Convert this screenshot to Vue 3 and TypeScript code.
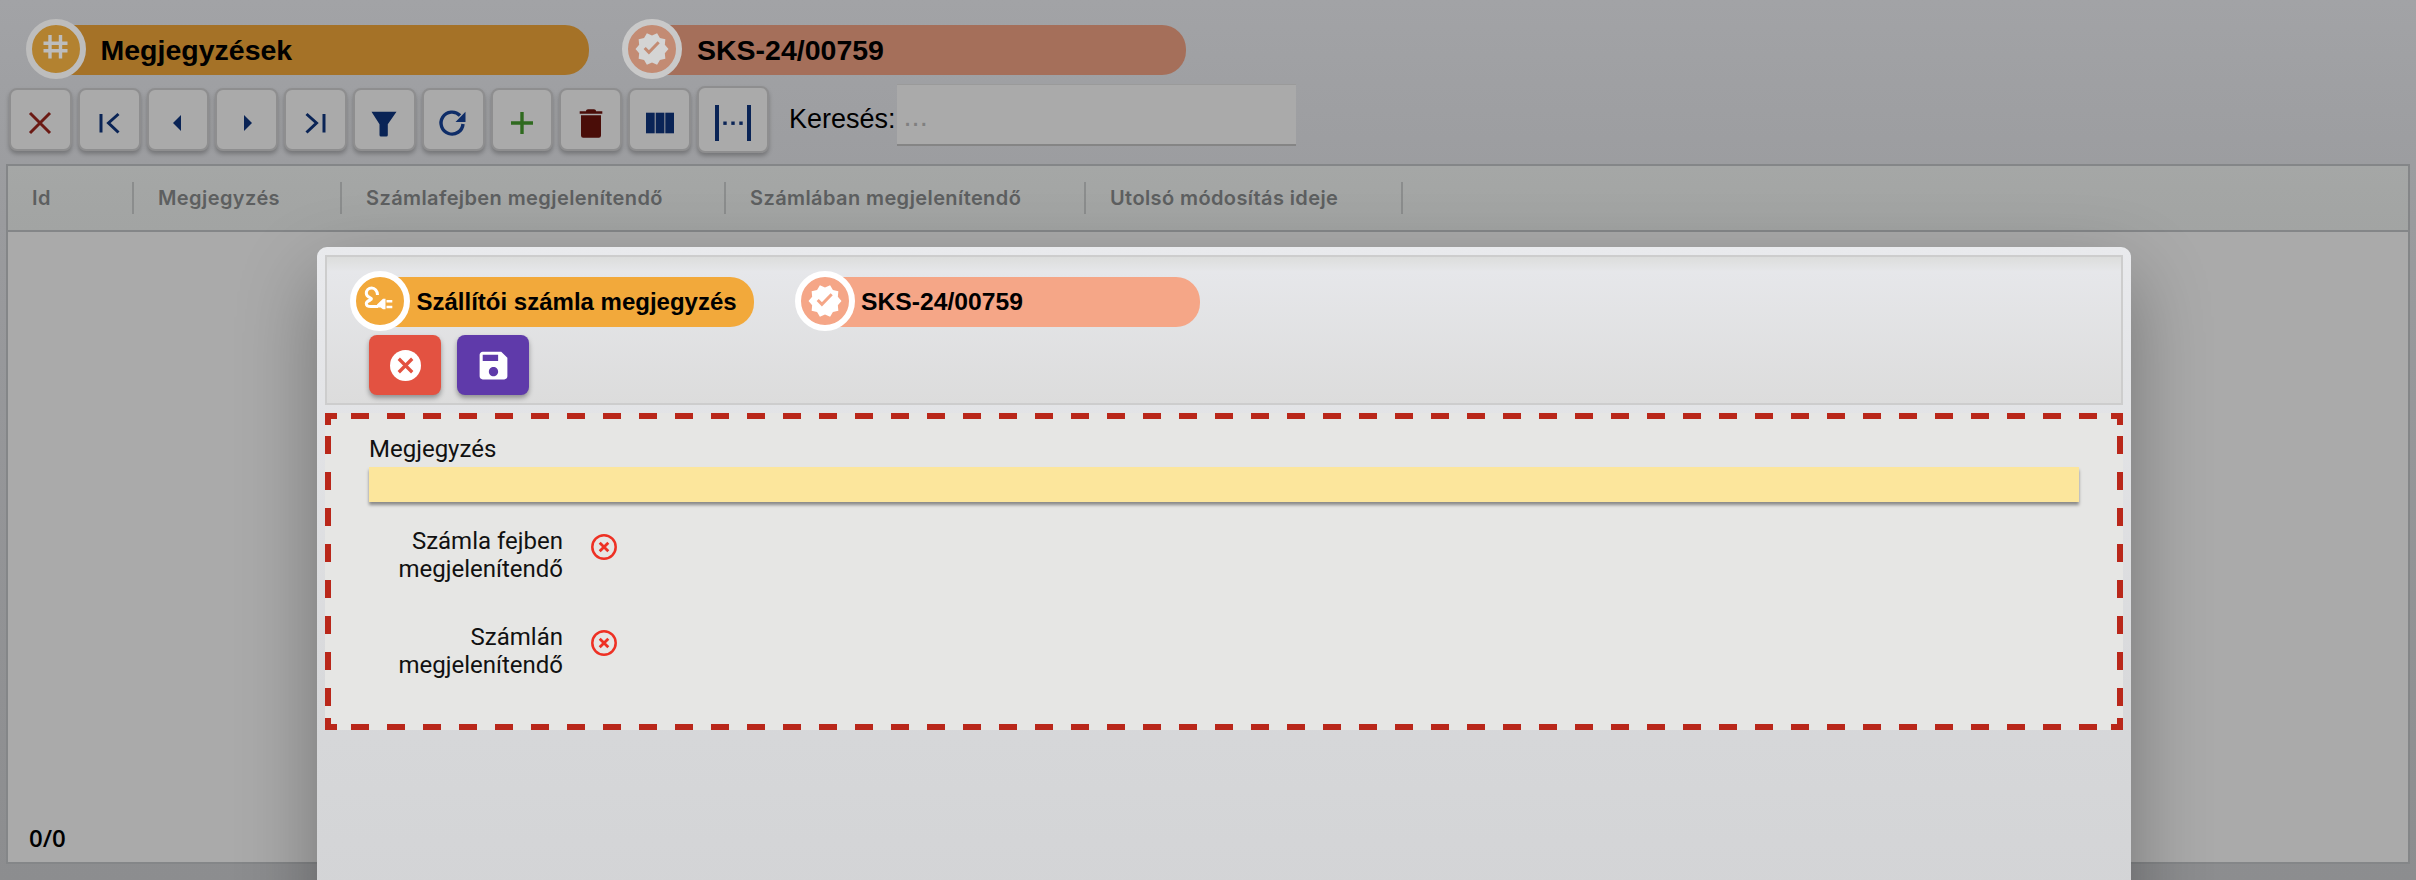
<script setup lang="ts">
const columns = [
  { label: 'Id', width: 126 },
  { label: 'Megjegyzés', width: 208 },
  { label: 'Számlafejben megjelenítendő', width: 384 },
  { label: 'Számlában megjelenítendő', width: 360 },
  { label: 'Utolsó módosítás ideje', width: 317 }
]
const flags = [
  ['Számla fejben', 'megjelenítendő'],
  ['Számlán', 'megjelenítendő']
]
const star = 'M23 12l-2.44-2.79.34-3.69-3.61-.82-1.89-3.2L12 2.96 8.6 1.5 6.71 4.69 3.1 5.5l.34 3.7L1 12l2.44 2.79-.34 3.7 3.61.82L8.6 22.5l3.4-1.47 3.4 1.46 1.89-3.19 3.61-.82-.34-3.69L23 12z'
</script>

<template>
  <div class="page">
    <div class="chips back-chips">
      <div class="chip c-main">
        <span class="badge">
          <svg viewBox="0 0 60 60" width="60" height="60">
            <path d="M24 16v23.5M34.5 16v23.5M17.5 24.3h24M17.5 31.7h24" fill="none" stroke="#bdbdbd" stroke-width="3.4" />
          </svg>
        </span>
        <span class="chip-label">Megjegyzések</span>
      </div>
      <div class="chip c-ref">
        <span class="badge">
          <svg viewBox="0 0 60 60" width="60" height="60">
            <path :d="star" transform="translate(12 12) scale(1.5)" fill="#d4d4d4" />
            <path d="M22.7 29l4.2 4.3 9.8-10" fill="none" stroke="#c38b73" stroke-width="3" />
          </svg>
        </span>
        <span class="chip-label">SKS-24/00759</span>
      </div>
    </div>

    <div class="toolbar">
      <button class="tool">
        <svg viewBox="0 0 40 40"><path d="M10 10l20 20M30 10L10 30" stroke="#6b1a14" stroke-width="3" fill="none" /></svg>
      </button>
      <button class="tool">
        <svg viewBox="0 0 40 40"><path d="M12 11v18.500M29.500 11l-10 9 10 9.500" stroke="#0a2456" stroke-width="3" fill="none" /></svg>
      </button>
      <button class="tool">
        <svg viewBox="0 0 40 40"><path d="M23 12l-8 8 8 8z" fill="#0a2456" /></svg>
      </button>
      <button class="tool">
        <svg viewBox="0 0 40 40"><path d="M17 12l8 8-8 8z" fill="#0a2456" /></svg>
      </button>
      <button class="tool">
        <svg viewBox="0 0 40 40"><path d="M28 11v18.500M10.500 11l10 9-10 9.500" stroke="#0a2456" stroke-width="3" fill="none" /></svg>
      </button>
      <button class="tool">
        <svg viewBox="0 0 40 40"><path d="M7.500 8.700h25L23.800 21.300V32a1.500 1.500 0 0 1-1.500 1.500h-5.300a1.500 1.500 0 0 1-1.500-1.500V21.300z" fill="#0a2456" /></svg>
      </button>
      <button class="tool">
        <svg viewBox="0 0 40 40">
          <path d="M27 12.500A11 11 0 1 0 30 21" stroke="#0f2d68" stroke-width="3.400" fill="none" />
          <path d="M32.500 8.700V19h-10z" fill="#0f2d68" />
        </svg>
      </button>
      <button class="tool">
        <svg viewBox="0 0 40 40"><path d="M20 9v22M9 20h22" stroke="#2f6a1f" stroke-width="3.400" fill="none" /></svg>
      </button>
      <button class="tool">
        <svg viewBox="0 0 40 40">
          <path d="M15 8.200c0-1.200 1-1.900 2-1.900h6c1 0 2 .7 2 1.900h6.300v2.500H8.700V8.200z" fill="#4a0d08" />
          <path d="M10 12.200h20V32.500a2.200 2.200 0 0 1-2.200 2.200H12.200A2.200 2.200 0 0 1 10 32.500z" fill="#4a0d08" />
        </svg>
      </button>
      <button class="tool">
        <svg viewBox="0 0 40 40">
          <rect x="6" y="9.700" width="8.700" height="20.600" fill="#0a2456" />
          <rect x="15.700" y="9.700" width="8.700" height="20.600" fill="#0a2456" />
          <rect x="25.300" y="9.700" width="8.700" height="20.600" fill="#0a2456" />
        </svg>
      </button>
      <button class="tool tool-wide">
        <svg viewBox="0 0 50 50">
          <path d="M9 7v36M41 7v36" stroke="#0a2456" stroke-width="4" fill="none" />
          <rect x="15.300" y="23.500" width="3.400" height="3.400" fill="#0a2456" />
          <rect x="23.300" y="23.500" width="3.400" height="3.400" fill="#0a2456" />
          <rect x="31.300" y="23.500" width="3.400" height="3.400" fill="#0a2456" />
        </svg>
      </button>
      <label class="search-label">Keresés:</label>
      <input class="search" placeholder="..." />
    </div>

    <div class="grid">
      <div class="grid-head">
        <div v-for="c in columns" :key="c.label" class="th" :style="{ width: c.width + 'px' }">{{ c.label }}</div>
      </div>
      <div class="grid-body">
        <span class="count">0/0</span>
      </div>
    </div>

    <section class="modal">
      <header class="modal-head">
        <div class="chips modal-chips">
          <div class="chip m-main">
            <span class="badge">
              <svg viewBox="0 0 60 60" width="60" height="60">
                <path d="M27.500 24C27.500 20 24.800 17 21.700 17C18.500 17 16.300 19.500 16.300 22.300C16.300 24.800 18.200 26 20.300 26.800C21.800 27.400 21.800 28.300 20.300 29C18 30 16.300 31 16.300 32.500C16.300 34.500 18.500 35.500 21 35.500H28" fill="none" stroke="#fff" stroke-width="3" />
                <path d="M27 33.500L33 27.800H35.500V38.300H33L30.500 36.500H27z" fill="#fff" />
                <path d="M36.500 29h5.800v2.500h-5.800zM36.500 34.700h5.800v2.600h-5.800z" fill="#fff" />
              </svg>
            </span>
            <span class="chip-label">Szállítói számla megjegyzés</span>
          </div>
          <div class="chip m-ref">
            <span class="badge">
              <svg viewBox="0 0 60 60" width="60" height="60">
                <path :d="star" transform="translate(12 12) scale(1.5)" fill="#fff" />
                <path d="M22.700 29l4.200 4.300 9.800-10" fill="none" stroke="#f5a687" stroke-width="3" />
              </svg>
            </span>
            <span class="chip-label">SKS-24/00759</span>
          </div>
        </div>
        <div class="actions">
          <button class="act act-cancel">
            <svg viewBox="0 0 30 30" width="31" height="31">
              <circle cx="15" cy="15" r="15" fill="#fff" />
              <path d="M8.500 8.500l13 13M21.500 8.500l-13 13" stroke="#e35241" stroke-width="3.200" fill="none" />
            </svg>
          </button>
          <button class="act act-save">
            <svg viewBox="0 0 24 24" width="37" height="37">
              <path d="M17 3H5c-1.110 0-2 .9-2 2v14c0 1.100.89 2 2 2h14c1.100 0 2-.9 2-2V7l-4-4zm-5 16c-1.660 0-3-1.340-3-3s1.340-3 3-3 3 1.340 3 3-1.340 3-3 3zm3-10H5V5h10v4z" fill="#fff" />
            </svg>
          </button>
        </div>
      </header>

      <div class="form">
        <label class="field-label">Megjegyzés</label>
        <input class="field" />
        <div v-for="(f, i) in flags" :key="i" class="flag">
          <div class="flag-label">{{ f[0] }}<br />{{ f[1] }}</div>
          <svg class="flag-icon" viewBox="0 0 26 26" width="26" height="26">
            <circle cx="13" cy="13" r="11.700" fill="none" stroke="#ee3124" stroke-width="2.500" />
            <path d="M8.700 8.700l8.600 8.600M17.300 8.700l-8.600 8.600" stroke="#ee3124" stroke-width="2.800" fill="none" />
          </svg>
        </div>
      </div>
    </section>
  </div>
</template>

<style scoped>
.page {
  position: relative;
  width: 2416px;
  height: 880px;
  overflow: hidden;
  box-sizing: border-box;
  padding-top: 19px;
  background: linear-gradient(180deg, #a2a3a6 0%, #9a9b9e 25%, #8c8d8f 100%);
  font-family: "Liberation Sans", Arial, sans-serif;
  color: #000;
}
.chips {
  display: flex;
  align-items: center;
}
.back-chips {
  margin-left: 26px;
}
.chip {
  display: flex;
  align-items: center;
  height: 60px;
}
.badge {
  position: relative;
  z-index: 1;
  flex: none;
  width: 60px;
  height: 60px;
  box-sizing: border-box;
  border-radius: 50%;
  border: 6px solid #fff;
}
.badge svg {
  display: block;
  margin: -6px;
}
.chip-label {
  display: flex;
  align-items: center;
  box-sizing: border-box;
  height: 50px;
  margin: 2px 0 0 -30px;
  border-radius: 0 24px 24px 0;
  font-weight: 700;
  white-space: nowrap;
}
.c-main .badge {
  background: #b38230;
  border-color: #bdbdbd;
}
.c-main .chip-label {
  width: 533px;
  padding-left: 44.500px;
  background: #a57227;
  font-size: 28.500px;
}
.c-ref {
  margin-left: 33px;
}
.c-ref .badge {
  background: #c38b73;
  border-color: #c9c9c9;
}
.c-ref .chip-label {
  width: 534px;
  padding-left: 45px;
  background: #a56f5a;
  font-size: 28.500px;
}
.toolbar {
  display: flex;
  align-items: flex-start;
  height: 69px;
  margin: 5px 0 0 9px;
}
.tool {
  flex: none;
  display: flex;
  align-items: center;
  justify-content: center;
  box-sizing: border-box;
  width: 62.800px;
  height: 63px;
  margin: 4px 6px 0 0;
  padding: 6px 0 0;
  background: #aaaaaa;
  border: 2px solid #8e8e8f;
  border-radius: 8px;
  box-shadow: 0 3px 4px rgba(0, 0, 0, 0.25);
}
.tool svg {
  width: 40px;
  height: 40px;
  flex: none;
}
.tool-wide {
  width: 72px;
  height: 67px;
  margin-top: 2px;
  margin-right: 0;
}
.tool-wide svg {
  width: 50px;
  height: 50px;
}
.search-label {
  margin: 20px 1px 0 20px;
  font-size: 27px;
  line-height: 31px;
  color: #000;
}
.search {
  box-sizing: border-box;
  width: 399px;
  height: 62px;
  padding: 4px 7px 0;
  background: #aaaaaa;
  border: 0;
  border-top: 1px solid #9a9a9a;
  border-bottom: 2px solid #858585;
  outline: none;
  font-family: inherit;
  font-size: 29px;
}
.search::placeholder {
  color: #808080;
  opacity: 1;
}
.grid {
  display: flex;
  flex-direction: column;
  box-sizing: border-box;
  width: 2404px;
  height: 700px;
  margin: 11px 0 0 6px;
  border: 2px solid #848688;
  background: #aaaaaa;
}
.grid-head {
  display: flex;
  flex: none;
  height: 64px;
  box-sizing: content-box;
  border-bottom: 2px solid #848688;
  background: linear-gradient(180deg, #a5a7a6, #a2a4a3);
}
.th {
  position: relative;
  flex: none;
  box-sizing: border-box;
  padding-left: 24px;
  font-family: Inter, "Liberation Sans", sans-serif;
  font-size: 20px;
  font-weight: 600;
  letter-spacing: 0.4px;
  line-height: 64px;
  color: #5d5f60;
  white-space: nowrap;
}
.th::after {
  content: "";
  position: absolute;
  top: 16px;
  right: 0;
  width: 2px;
  height: 32px;
  background: #8b8d8d;
}
.grid-body {
  flex: 1;
  display: flex;
  flex-direction: column;
  justify-content: flex-end;
  padding: 0 0 8px 21px;
}
.count {
  font-family: "Open Sans", sans-serif;
  font-size: 24px;
  font-weight: 600;
  line-height: 33px;
  color: #000;
}
.modal {
  position: absolute;
  left: 317px;
  top: 247px;
  box-sizing: border-box;
  width: 1814px;
  height: 700px;
  padding: 8px;
  border-radius: 10px 10px 0 0;
  background: linear-gradient(180deg, #e9eaed 0%, #d6d7d9 70%, #d2d3d5 100%);
  box-shadow: 0 30px 80px rgba(0, 0, 0, 0.32);
}
.modal-head {
  box-sizing: border-box;
  height: 150px;
  padding: 14px 0 0 23px;
  border: 2px solid #cdcdcd;
  background: linear-gradient(180deg, #dcdddc 0, #e6e7ea 10%, #dcdcdc 100%);
}
.m-main .badge {
  background: #f2a93b;
}
.m-main .chip-label {
  width: 374px;
  padding-left: 36.500px;
  background: #f2a93b;
  font-size: 24px;
}
.m-ref {
  margin-left: 41px;
}
.m-ref .badge {
  background: #f5a687;
}
.m-ref .chip-label {
  width: 375px;
  padding-left: 36px;
  background: #f5a687;
  font-size: 24.700px;
}
.actions {
  display: flex;
  gap: 16px;
  margin: 4px 0 0 19px;
}
.act {
  display: flex;
  align-items: center;
  justify-content: center;
  width: 72px;
  height: 60px;
  padding: 0;
  border: 0;
  border-radius: 8px;
  box-shadow: 0 3px 5px rgba(0, 0, 0, 0.35);
}
.act-cancel {
  background: #e35241;
}
.act-cancel svg {
  margin-top: 1px;
}
.act-save {
  background: #5f3aaa;
}
.form {
  box-sizing: border-box;
  height: 317px;
  margin-top: 8px;
  padding: 18px 44px 0 44px;
  font-family: Roboto, sans-serif;
  background-color: #e6e6e4;
  background-repeat: no-repeat, no-repeat, no-repeat, no-repeat, no-repeat, no-repeat, no-repeat, no-repeat, repeat-x, repeat-x, repeat-y, repeat-y;
  background-image:
    linear-gradient(#b9271a, #b9271a), linear-gradient(#b9271a, #b9271a),
    linear-gradient(#b9271a, #b9271a), linear-gradient(#b9271a, #b9271a),
    linear-gradient(#b9271a, #b9271a), linear-gradient(#b9271a, #b9271a),
    linear-gradient(#b9271a, #b9271a), linear-gradient(#b9271a, #b9271a),
    linear-gradient(90deg, #b9271a 50%, transparent 50%),
    linear-gradient(90deg, #b9271a 50%, transparent 50%),
    linear-gradient(180deg, #b9271a 50%, transparent 50%),
    linear-gradient(180deg, #b9271a 50%, transparent 50%);
  background-size:
    12px 6px, 6px 12px, 12px 6px, 6px 12px,
    12px 6px, 6px 12px, 12px 6px, 6px 12px,
    36px 6px, 36px 6px, 6px 36px, 6px 36px;
  background-position:
    0 0, 0 0, 100% 0, 100% 0,
    0 100%, 0 100%, 100% 100%, 100% 100%,
    26px 0, 26px 100%, 0 23px, 100% 23px;
}
.field-label {
  display: block;
  font-size: 24px;
  line-height: 36px;
  color: #111;
}
.field {
  display: block;
  box-sizing: border-box;
  width: 1710px;
  height: 35px;
  border: 0;
  outline: none;
  background: #fce69c;
  box-shadow: 0 3px 3px rgba(0, 0, 0, 0.4);
}
.flag {
  display: flex;
  align-items: flex-start;
  margin-top: 25px;
  height: 72px;
}
.flag + .flag {
  margin-top: 24px;
}
.flag-label {
  width: 194px;
  text-align: right;
  font-size: 24px;
  line-height: 28px;
  color: #111;
}
.flag-icon {
  margin: 7px 0 0 28px;
}
</style>
